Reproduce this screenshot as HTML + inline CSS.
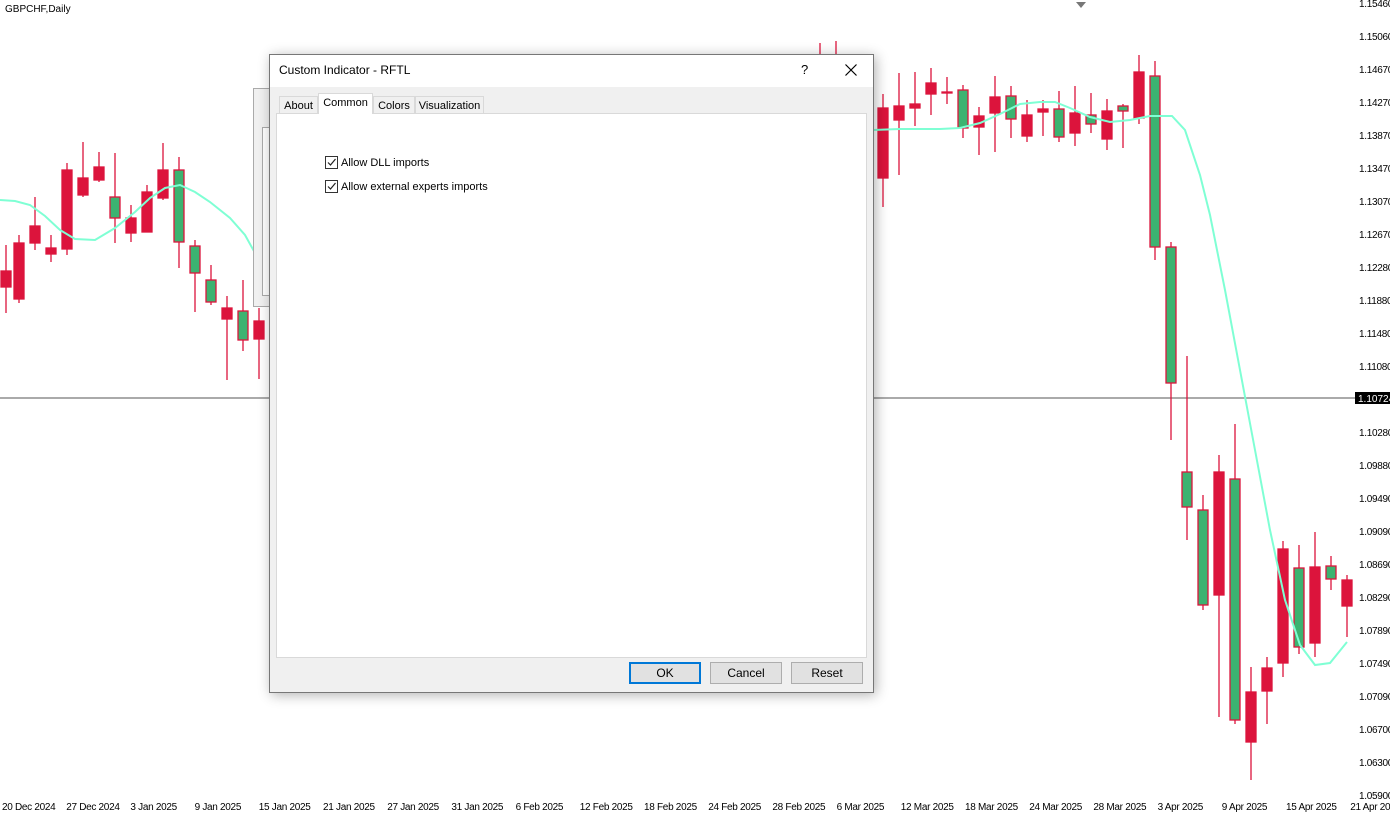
<!DOCTYPE html><html><head><style>
body{margin:0;width:1390px;height:819px;position:relative;background:#fff;font-family:"Liberation Sans",sans-serif;overflow:hidden}
.t{position:absolute;font-size:11px;color:#000;white-space:nowrap}
.dlg{position:absolute;left:269px;top:54px;width:603px;height:637px;background:#f0f0f0;border:1px solid #777;box-shadow:2px 2px 12px rgba(0,0,0,.3);font-size:11px}
.tab{position:absolute;top:40px;height:18px;border:1px solid #d9d9d9;border-bottom:none;background:#f0f0f0;line-height:18px;text-align:center}
.btn{position:absolute;top:607px;width:70px;height:20px;border:1px solid #adadad;background:#e1e1e1;text-align:center;line-height:20px;font-size:12px}
.cb{position:absolute;left:55px;width:11px;height:11px;border:1px solid #333;background:#fff}
</style></head><body>
<svg width="1390" height="819" style="position:absolute;left:0;top:0">
<line x1="0" y1="398" x2="1355" y2="398" stroke="#555" stroke-width="1"/>
<g id="c" stroke="#dc143c" stroke-width="1.3"></g>
<polyline fill="none" stroke="#7fffd4" stroke-width="2" points="0,200 15,201 30,205 45,216 60,230 75,239 95,240 115,228 135,212 150,198 165,188 180,185 195,192 210,202 230,218 245,235 260,262"/>
<polyline fill="none" stroke="#7fffd4" stroke-width="2" points="873,130 900,129 940,129 960,128 980,123 1000,114 1020,104 1040,102 1055,102 1070,108 1090,117 1110,122 1130,120 1150,116 1165,116 1172,116 1185,130 1200,175 1210,215 1225,290 1240,370 1255,450 1270,530 1285,600 1300,645 1315,665 1330,663 1347,642"/>
<rect x="1355" y="392" width="35" height="12" fill="#000"/>
<text x="1358" y="402" font-size="10" fill="#fff" font-family="Liberation Sans">1.10724</text>
<polygon points="1076,2 1086,2 1081,8" fill="#777"/>
</svg>
<div class="t" style="left:5px;top:4px;font-size:10px">GBPCHF,Daily</div>
<div id="ax"></div>
<div style="position:absolute;left:253px;top:88px;width:20px;height:217px;background:#f0f0f0;border:1px solid #aaa"></div>
<div style="position:absolute;left:262px;top:127px;width:10px;height:167px;border:1px solid #aaa;background:#fff"></div>
<div class="dlg">
<div style="position:absolute;left:0;top:0;width:603px;height:32px;background:#fff"></div>
<div style="position:absolute;left:9px;top:8px;font-size:12px">Custom Indicator - RFTL</div>
<div style="position:absolute;left:531px;top:7px;font-size:13px">?</div>
<svg style="position:absolute;left:575px;top:9px" width="12" height="12"><path d="M0.5 0.5L11.5 11.5M11.5 0.5L0.5 11.5" stroke="#000" stroke-width="1.2"/></svg>
<div class="tab" style="left:9px;width:37px;top:41px">About</div>
<div class="tab" style="left:48px;width:53px;top:38px;height:20px;background:#fff;z-index:2">Common</div>
<div class="tab" style="left:103px;width:40px;top:41px">Colors</div>
<div class="tab" style="left:145px;width:67px;top:41px">Visualization</div>
<div style="position:absolute;left:6px;top:58px;width:589px;height:543px;background:#fff;border:1px solid #d9d9d9"></div>
<div class="cb" style="top:101px"><svg width="11" height="11" style="position:absolute;left:0;top:0"><path d="M2 5.5L4.5 8L9.5 2" fill="none" stroke="#222" stroke-width="1.2"/></svg></div>
<div style="position:absolute;left:71px;top:102px">Allow DLL imports</div>
<div class="cb" style="top:125px"><svg width="11" height="11" style="position:absolute;left:0;top:0"><path d="M2 5.5L4.5 8L9.5 2" fill="none" stroke="#222" stroke-width="1.2"/></svg></div>
<div style="position:absolute;left:71px;top:126px">Allow external experts imports</div>
<div class="btn" style="left:359px;border:2px solid #0078d7;width:68px;height:18px;line-height:18px">OK</div>
<div class="btn" style="left:440px">Cancel</div>
<div class="btn" style="left:521px">Reset</div>
</div>
<script>
var C=[[6,271,287,245,313,0],[19,243,299,235,303,0],[35,226,243,197,250,0],[51,248,254,235,262,0],[67,170,249,163,255,0],[83,178,195,142,197,0],[99,167,180,152,182,0],[115,197,218,153,243,1],[131,218,233,205,242,0],[147,192,232,185,232,0],[163,170,198,143,200,0],[179,170,242,157,268,1],[195,246,273,240,312,1],[211,280,302,265,305,1],[227,308,319,296,380,0],[243,311,340,280,351,1],[259,321,339,308,379,0],[820,43,43,43,55,0],[836,43,43,41,55,0],
[883,108,178,94,207,0],[899,106,120,73,175,0],[915,104,108,72,126,0],[931,83,94,68,115,0],[947,92,93,77,104,0],[963,90,128,85,138,1],[979,116,127,107,155,0],[995,97,113,76,152,0],[1011,96,119,86,138,1],[1027,115,136,100,142,0],[1043,109,112,100,136,0],[1059,109,137,91,142,1],[1075,113,133,86,146,0],[1091,115,124,93,133,1],[1107,111,139,99,150,0],[1123,106,111,104,148,1],[1139,72,118,55,124,0],[1155,76,247,61,260,1],[1171,247,383,242,440,1],[1187,472,507,356,540,1],[1203,510,605,495,610,1],[1219,472,595,455,717,0],[1235,479,720,424,724,1],[1251,692,742,667,780,0],[1267,668,691,657,724,0],[1283,549,663,541,677,0],[1299,568,647,545,654,1],[1315,567,643,532,657,0],[1331,566,579,556,590,1],[1347,580,606,575,637,0]];
var g=document.getElementById('c'),s='';
C.forEach(function(c){s+='<line x1="'+c[0]+'" x2="'+c[0]+'" y1="'+c[3]+'" y2="'+c[4]+'"/>';if(c[2]>c[1])s+='<rect x="'+(c[0]-5)+'" y="'+c[1]+'" width="10" height="'+(c[2]-c[1])+'" fill="'+(c[5]?'#3cb371':'#dc143c')+'"/>';});
g.innerHTML=s;
var P=['1.15460','1.15060','1.14670','1.14270','1.13870','1.13470','1.13070','1.12670','1.12280','1.11880','1.11480','1.11080','','1.10280','1.09880','1.09490','1.09090','1.08690','1.08290','1.07890','1.07490','1.07090','1.06700','1.06300','1.05900'],h='';
P.forEach(function(p,i){if(p)h+='<div class="t" style="left:1359px;top:'+(-1+i*33)+'px;font-size:10px;letter-spacing:-0.3px">'+p+'</div>';});
var D=['20 Dec 2024','27 Dec 2024','3 Jan 2025','9 Jan 2025','15 Jan 2025','21 Jan 2025','27 Jan 2025','31 Jan 2025','6 Feb 2025','12 Feb 2025','18 Feb 2025','24 Feb 2025','28 Feb 2025','6 Mar 2025','12 Mar 2025','18 Mar 2025','24 Mar 2025','28 Mar 2025','3 Apr 2025','9 Apr 2025','15 Apr 2025','21 Apr 2025'];
D.forEach(function(d,i){h+='<div class="t" style="left:'+(2+i*64.2)+'px;top:802px;font-size:10px;letter-spacing:-0.3px">'+d+'</div>';});
document.getElementById('ax').innerHTML=h;
</script>
</body></html>
